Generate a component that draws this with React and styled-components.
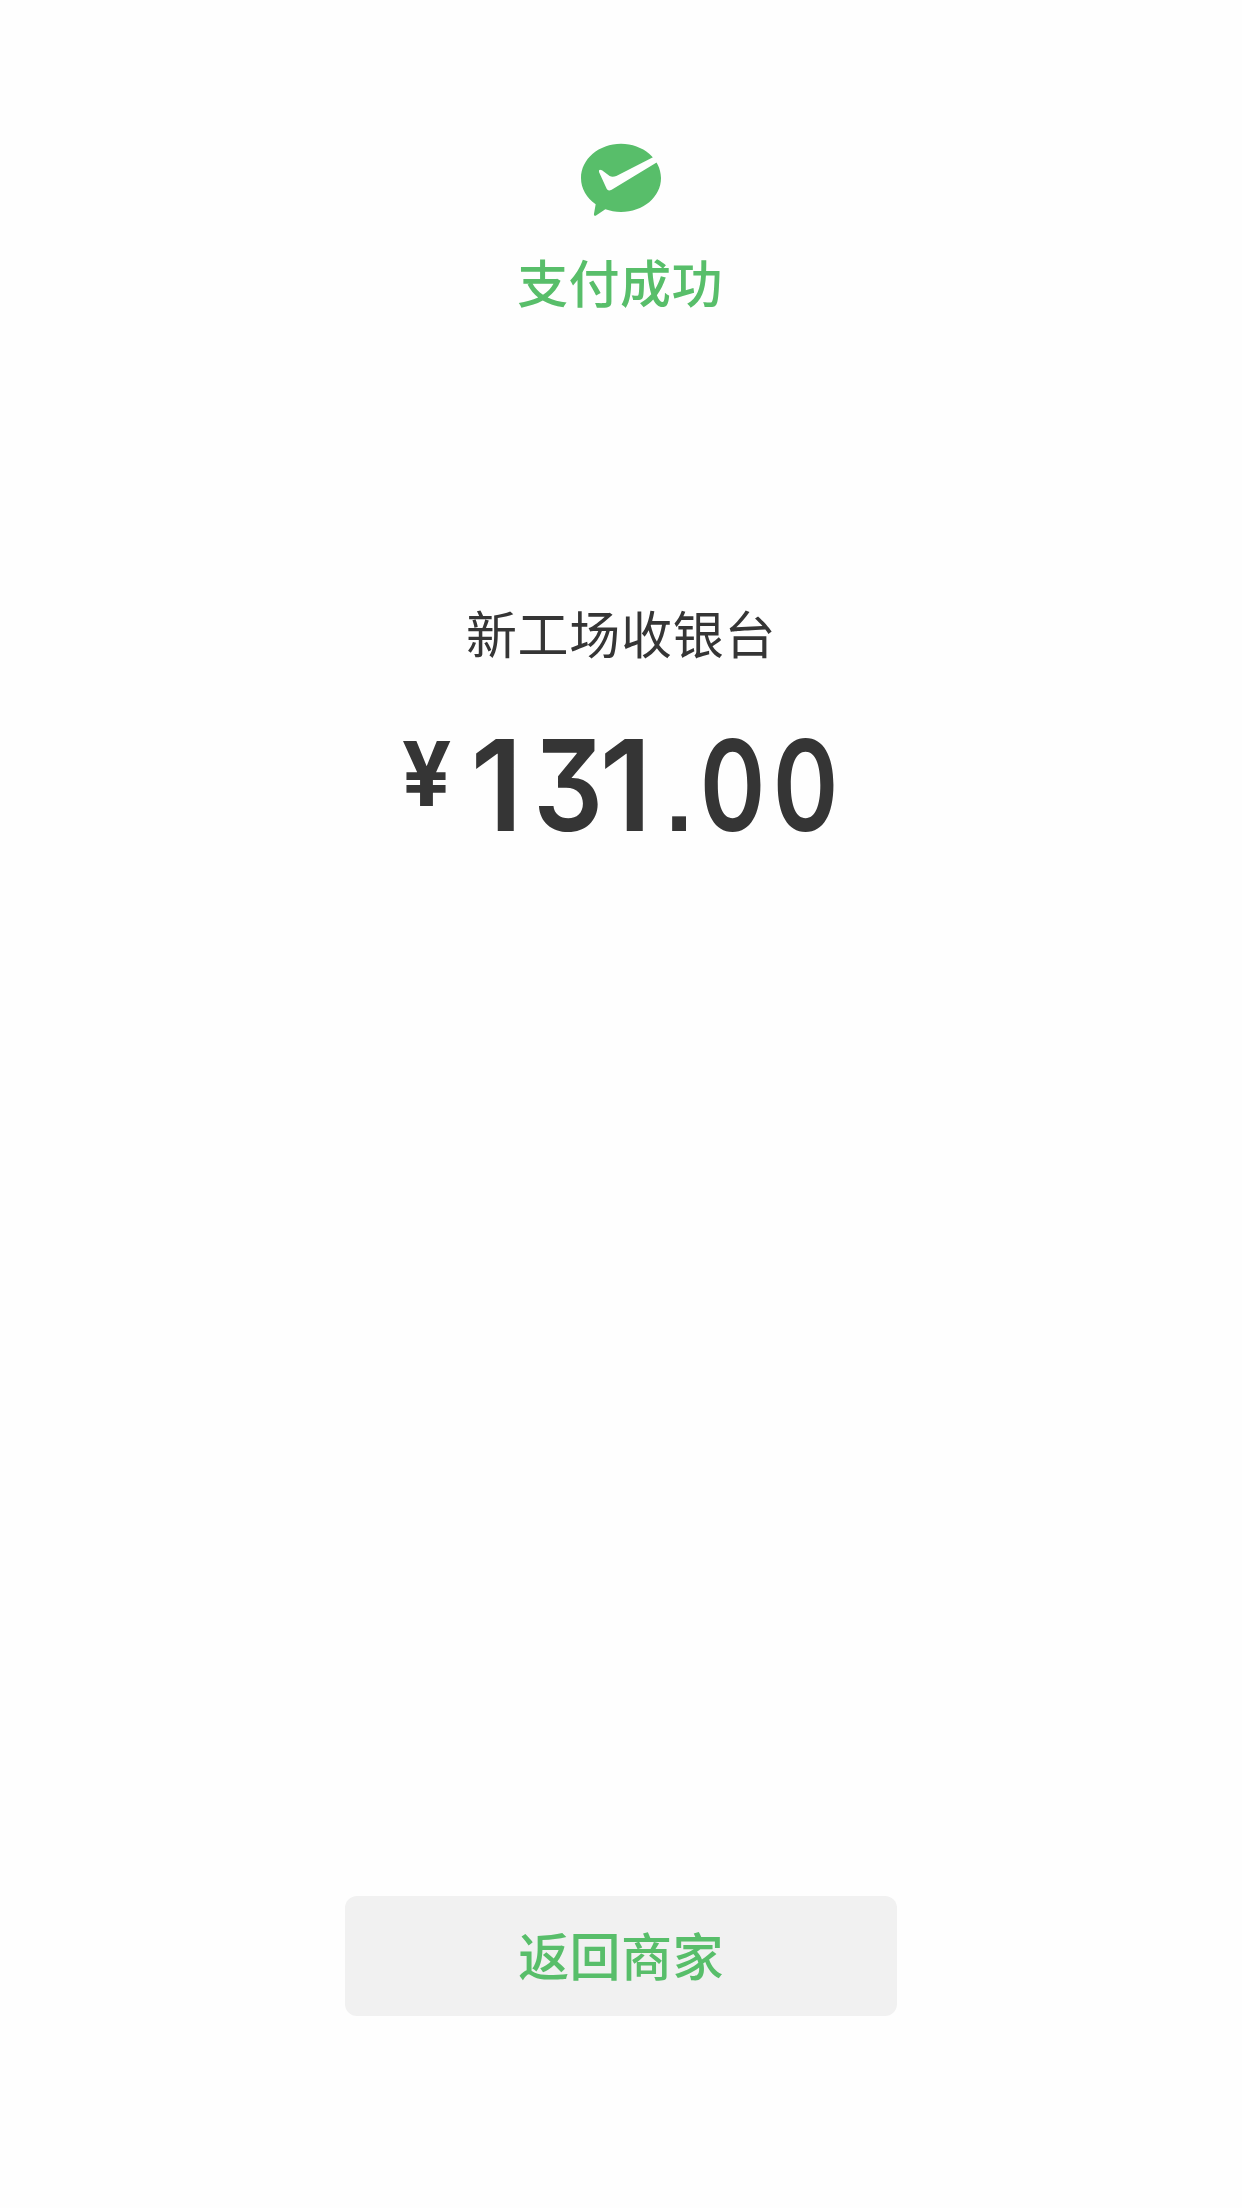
import React from "react";
import styled, { createGlobalStyle } from "styled-components";

const amount = [
  { char: "1", width: 87, scale: 0.98 },
  { char: "3", width: 56, scale: 0.87 },
  { char: "1", width: 58, scale: 0.98 },
  { char: ".", width: 49, scale: 1 },
  { char: "0", width: 58, scale: 0.79 },
  { char: "0", width: 88, scale: 0.79 },
];

const App = () => {
  return (
    <Main>
      <GlobalStyle />
      <Status>
        <PayIcon />
        <StatusText>支付成功</StatusText>
      </Status>
      <Merchant>新工场收银台</Merchant>
      <Amount>
        <Currency>¥</Currency>
        {amount.map((item, index) => (
          <Digit
            key={index}
            $width={item.width}
            $scale={item.scale}
            $point={item.char === "."}
          >
            <span>{item.char}</span>
          </Digit>
        ))}
      </Amount>
      <BackButton>返回商家</BackButton>
    </Main>
  );
};

export default App;

const PayIcon = () => (
  <Bubble viewBox="0 0 360 300">
    <path
      fill="#58be6a"
      d="M183 41C249 41 303 87 303 144C303 201 249 246 183 246C166 246 150 243 136 238L107 257Q100 259 102 251L107 223C80 204 63 176 63 144C63 87 117 41 183 41Z"
    />
    <path
      fill="#fefefe"
      d="M117 126Q115 116 126 121L149 138Q157 143 169 138L276 83L302 69L312 87L291 97L155 179Q144 185 140 176Z"
    />
  </Bubble>
);

const GlobalStyle = createGlobalStyle`
  body {
    margin: 0;
    background: #fefefe;
  }
`;

const Main = styled.div`
  box-sizing: border-box;
  height: 2208px;
  width: 100%;
  padding: 130px 0 192px;
  display: flex;
  flex-direction: column;
  align-items: center;
  font-family: "Noto Sans CJK SC", sans-serif;
  font-size: 51px;
  letter-spacing: 0.7px;
  color: #353535;
`;

const Status = styled.div`
  display: flex;
  flex-direction: column;
  align-items: center;
  color: #58be6a;
`;

const Bubble = styled.svg`
  width: 120px;
  height: 100px;
  margin-right: 2px;
`;

const StatusText = styled.div`
  margin-top: 13px;
  margin-right: 2px;
  height: 76px;
  line-height: 76px;
  font-weight: 500;
  letter-spacing: 0.4px;
`;

const Merchant = styled.div`
  margin-top: 275px;
  height: 76px;
  line-height: 76px;
`;

const Amount = styled.div`
  display: flex;
  width: 437px;
  margin-top: 49px;
  height: 130px;
  font-family: Inter, "Liberation Sans", sans-serif;
  font-weight: 600;
  letter-spacing: 0;
`;

const Currency = styled.div`
  flex-shrink: 0;
  width: 47px;
  margin-right: 4px;
  display: flex;
  justify-content: center;
  font-size: 89px;
  font-weight: 700;
  line-height: 109px;
  transform: scaleX(0.98);
`;

const Digit = styled.div`
  flex-shrink: 0;
  width: ${(props) => props.$width}px;
  text-align: center;
  white-space: nowrap;
  font-size: 126px;
  line-height: 132px;
  font-feature-settings: "cv09";
  span {
    display: inline-block;
    margin: 0 -20px;
    line-height: 1;
    transform: scaleX(${(props) => props.$scale});
    ${(props) =>
      props.$point &&
      `
      margin: 0;
      font-family: "Liberation Sans", sans-serif;
      font-size: 98px;
      font-weight: 700;
    `}
  }
`;

const BackButton = styled.button`
  width: 552px;
  height: 120px;
  margin-top: auto;
  padding: 0 0 5px;
  border: none;
  border-radius: 12px;
  background: #f1f1f1;
  color: #58be6a;
  font: inherit;
  font-weight: 500;
  letter-spacing: 0.4px;
  cursor: pointer;
`;
